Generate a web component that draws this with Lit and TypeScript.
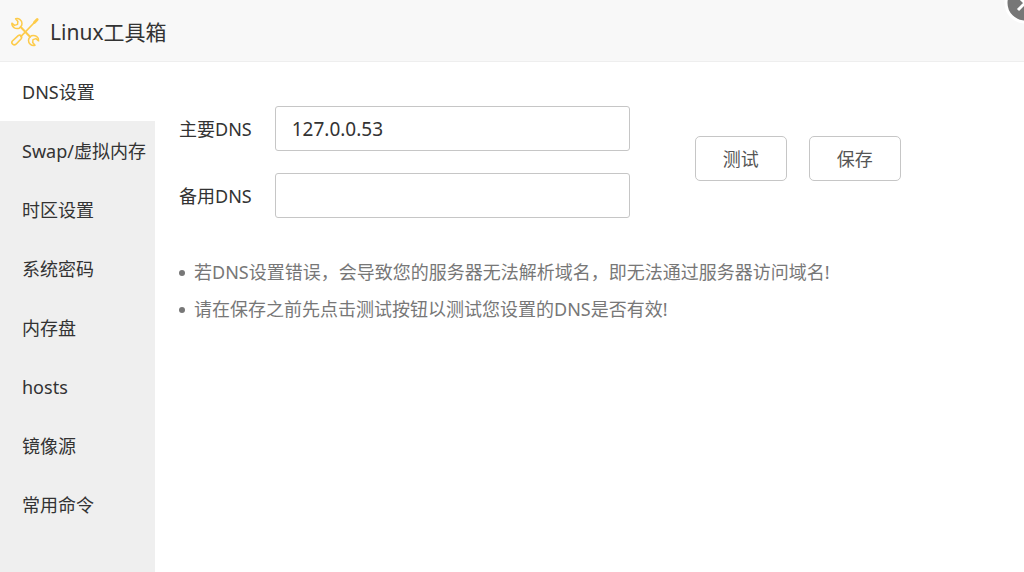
import { LitElement, html, css } from "lit";
import { customElement, state } from "lit/decorators.js";

const MENU = ["DNS设置", "Swap/虚拟内存", "时区设置", "系统密码", "内存盘", "hosts", "镜像源", "常用命令"];

const NOTES = [
  "若DNS设置错误，会导致您的服务器无法解析域名，即无法通过服务器访问域名!",
  "请在保存之前先点击测试按钮以测试您设置的DNS是否有效!",
];

@customElement("app-root")
export class AppRoot extends LitElement {
  @state() private active = 0;

  static styles = css`
    :host {
      display: flex;
      flex-direction: column;
      position: relative;
      min-height: 100vh;
      overflow: hidden;
      box-sizing: border-box;
      background: #fff;
      color: #333;
      font-family: "Noto Sans", "Noto Sans CJK SC", sans-serif;
      font-size: 18px;
      line-height: 24px;
    }
    * {
      box-sizing: border-box;
    }
    .header {
      display: flex;
      align-items: center;
      gap: 10px;
      height: 62px;
      padding: 2px 10px 0;
      background: #f8f8f8;
      border-bottom: 1px solid #eee;
    }
    .logo {
      width: 30px;
      height: 30px;
      fill: none;
      stroke: #fdcb4a;
      stroke-width: 1.6;
      stroke-linejoin: round;
      stroke-linecap: round;
    }
    .title {
      margin: 0;
      font-size: 21px;
      line-height: 28px;
      font-weight: 400;
    }
    .close {
      position: absolute;
      top: -18px;
      right: -22px;
      width: 42px;
      height: 42px;
      padding: 0;
      border: 0;
      background: none;
      cursor: pointer;
    }
    .close svg {
      display: block;
    }
    .body {
      flex: 1;
      display: flex;
    }
    .side {
      flex: none;
      width: 155px;
      background: #efefef;
    }
    .item {
      display: block;
      height: 59px;
      padding: 1px 0 0 22px;
      line-height: 59px;
      color: inherit;
      text-decoration: none;
      white-space: nowrap;
    }
    .item.active {
      background: #fff;
    }
    .main {
      flex: 1;
      padding: 44px 24px;
    }
    .form {
      display: flex;
      align-items: center;
      gap: 65px;
      margin: 0;
    }
    .fields {
      display: grid;
      grid-template-columns: auto 355px;
      align-items: center;
      column-gap: 23px;
      row-gap: 22px;
    }
    .text {
      width: 100%;
      height: 45px;
      padding: 0 16px;
      border: 1px solid #c6c6c6;
      border-radius: 3px;
      background: #fff;
      color: #333;
      font: inherit;
      font-size: 19px;
      outline: none;
    }
    .actions {
      display: flex;
      gap: 22px;
      padding-bottom: 7px;
    }
    .btn {
      width: 92px;
      height: 45px;
      padding: 0;
      border: 1px solid #c6c6c6;
      border-radius: 5px;
      background: #fff;
      color: #555;
      font: inherit;
      cursor: pointer;
    }
    .notes {
      margin: 36px 0 0;
      padding: 0;
      list-style: none;
      color: #777;
      line-height: 37px;
    }
    .note {
      display: flex;
      align-items: center;
      gap: 9px;
    }
    .note::before {
      content: "";
      flex: none;
      width: 6px;
      height: 6px;
      border-radius: 50%;
      background: #777;
    }
  `;

  render() {
    return html`
      <header class="header">
        <svg class="logo" viewBox="0 0 30 30" aria-hidden="true">
          <path d="M5.6 1.8C8.8.8 12.2 3.2 12 6.6L11.6 8.6 9.2 11.2C5.4 12.6 1.4 9.8 1.9 6.2L4.6 8.4 7.5 7.4 7.9 4.4Z" stroke-width="1.5" />
          <path d="M25 28.2C21.6 29.2 18.3 26.6 18.5 23.2L19 21.2 21.4 18.7C25.2 17.6 29 20.2 28.6 23.8L25.9 21.6 23 22.6 22.7 25.6Z" stroke-width="1.5" />
          <path d="M10.9 10.2 20 19.8" stroke-width="2" />
          <path d="M26.8 3 10.8 19.6" stroke-width="1.6" />
          <path d="M27.2 2.6 24.4 5.4" stroke-width="2.8" />
          <path d="M8.2 18.6Q10 17.6 11.2 19 12.3 20.4 11 22L6 27.2C3.8 29 .6 26.2 2.4 24Z" />
        </svg>
        <h1 class="title">Linux工具箱</h1>
      </header>
      <div class="body">
        <nav class="side">
          ${MENU.map(
            (label, i) => html`<a
              class="item ${i === this.active ? "active" : ""}"
              href="#"
              @click=${(e: Event) => {
                e.preventDefault();
                this.active = i;
              }}
              >${label}</a
            >`
          )}
        </nav>
        <main class="main">
          <form class="form" @submit=${(e: Event) => e.preventDefault()}>
            <div class="fields">
              <label for="dns1">主要DNS</label>
              <input class="text" id="dns1" type="text" value="127.0.0.53" />
              <label for="dns2">备用DNS</label>
              <input class="text" id="dns2" type="text" />
            </div>
            <div class="actions">
              <button class="btn" type="button">测试</button>
              <button class="btn" type="submit">保存</button>
            </div>
          </form>
          <ul class="notes">
            ${NOTES.map((n) => html`<li class="note">${n}</li>`)}
          </ul>
        </main>
      </div>
      <button class="close" type="button" aria-label="关闭">
        <svg width="42" height="42" viewBox="0 0 42 42">
          <circle cx="21" cy="21" r="19" fill="#777" stroke="#fff" stroke-width="3" />
          <path d="M14 14 28 28M28 14 14 28" stroke="#fff" stroke-width="3" />
        </svg>
      </button>
    `;
  }
}
